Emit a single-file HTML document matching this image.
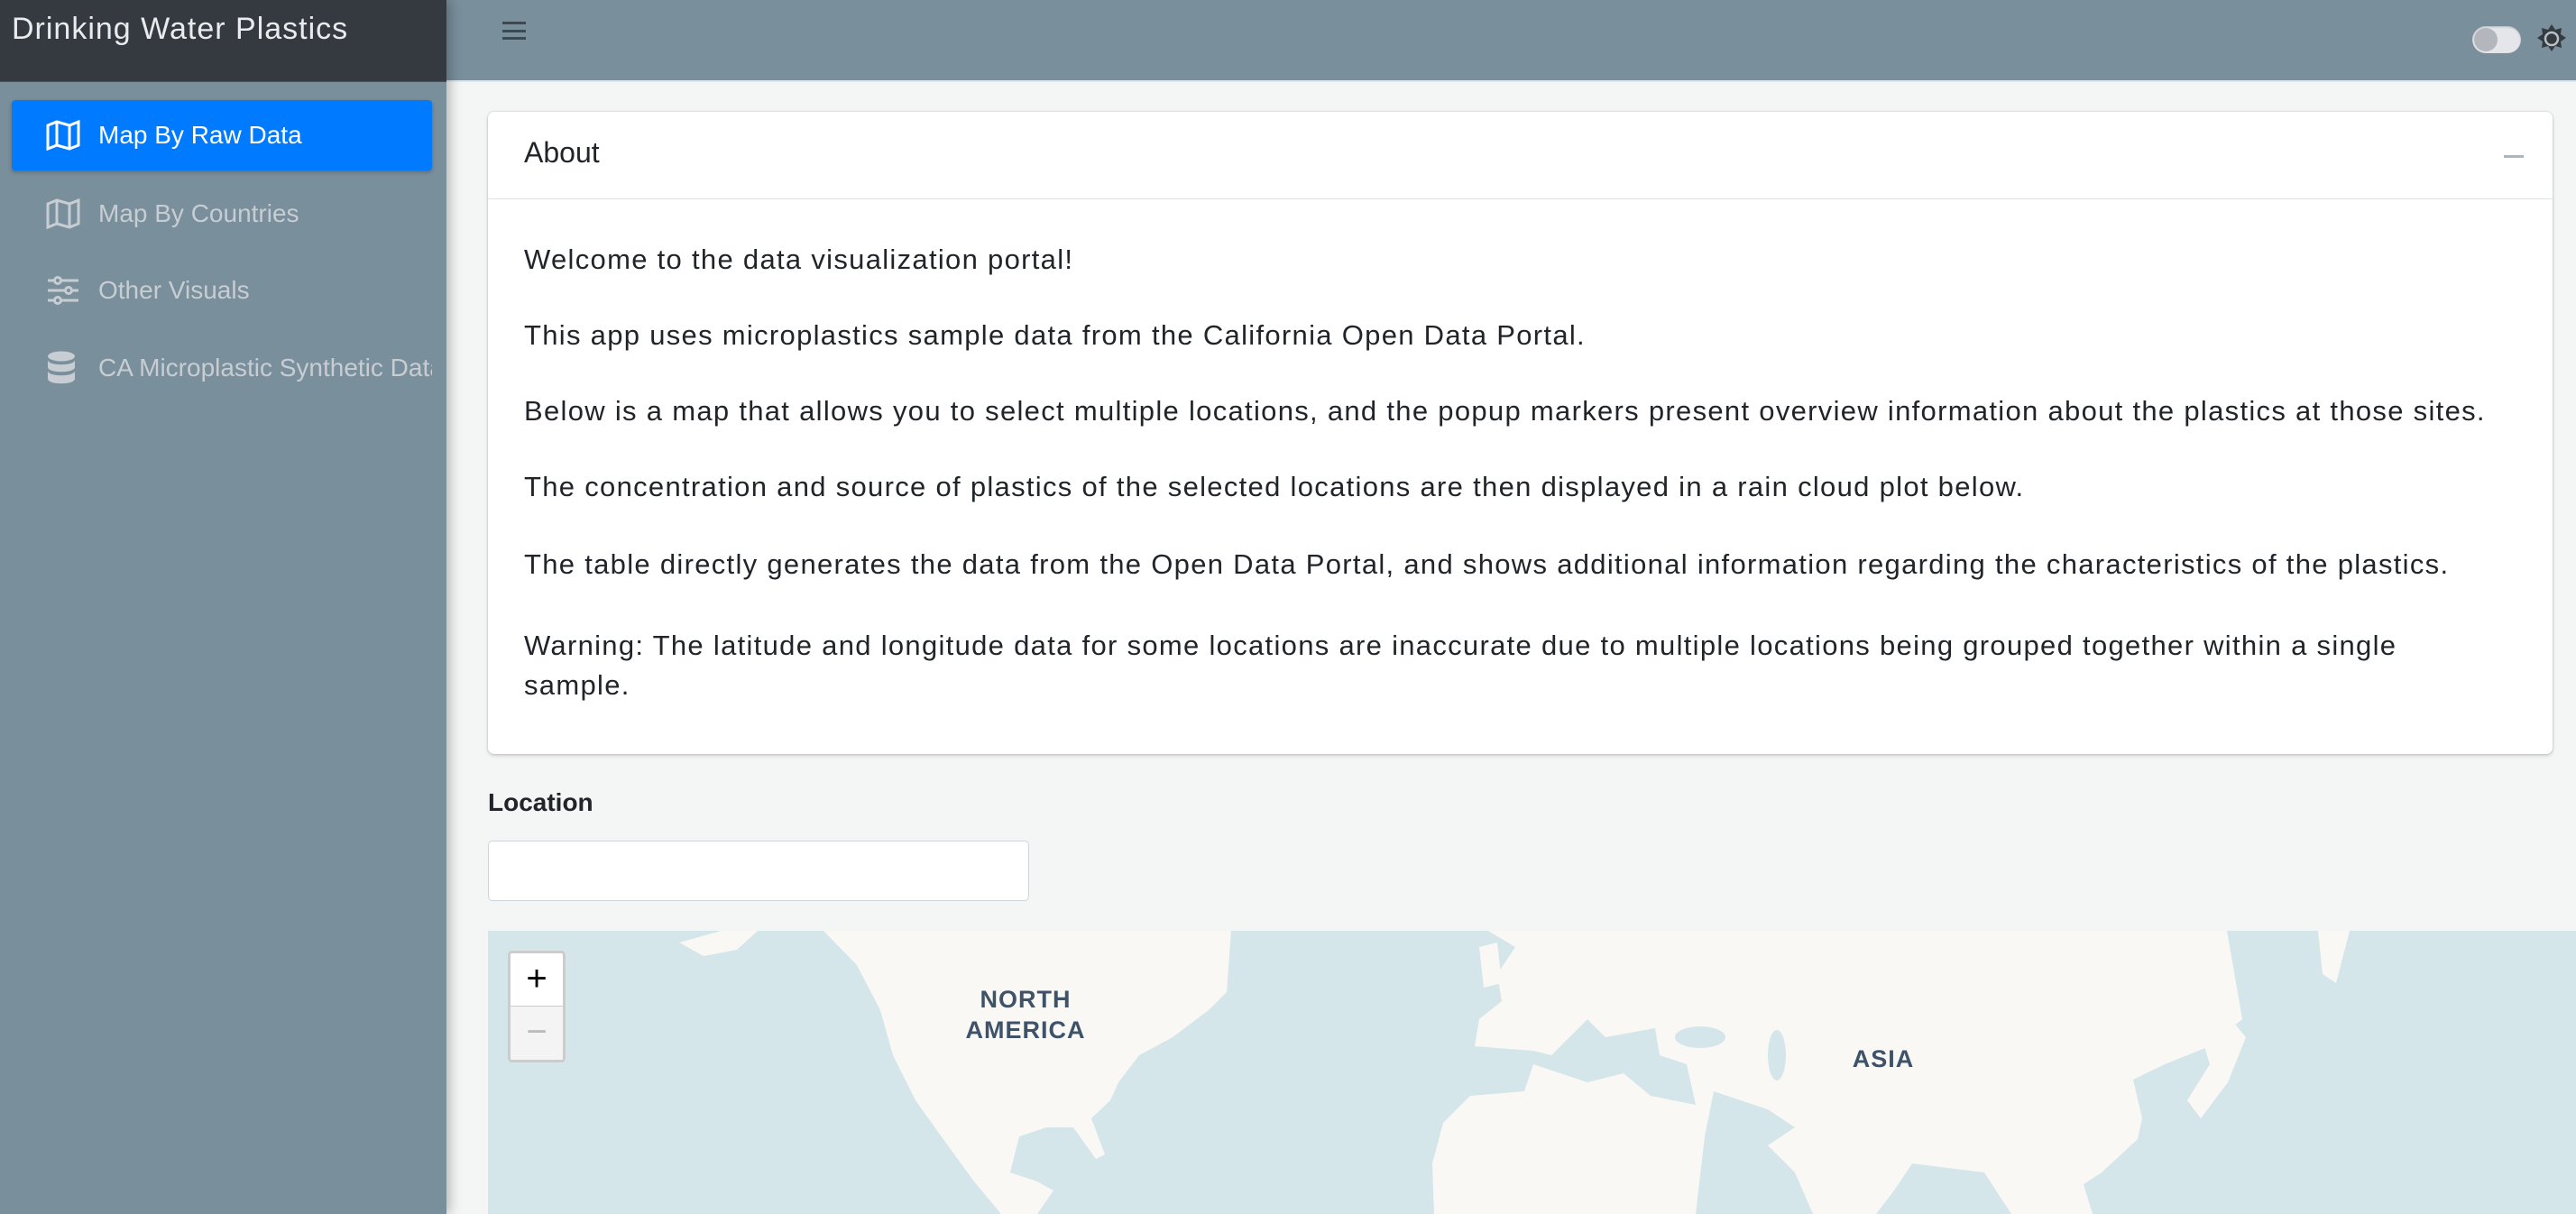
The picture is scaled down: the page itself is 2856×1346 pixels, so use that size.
<!DOCTYPE html>
<html><head><meta charset="utf-8"><style>
*{box-sizing:border-box;margin:0;padding:0}
body{width:2856px;height:1346px;overflow:hidden;background:#f4f6f6;font-family:"Liberation Sans",sans-serif;position:relative}
.sb{position:absolute;left:0;top:0;width:495px;height:1346px;background:#798f9b;box-shadow:4px 0 12px rgba(0,0,0,.25);z-index:2}
.brand{height:91px;background:#343a40;color:#e9ecef;font-size:34px;letter-spacing:1px;padding:13px 0 0 13px;border-bottom:1px solid #4b545c}
.nav{position:absolute;left:13px;width:466px;height:78px;border-radius:4px;color:#c8cdd3;font-size:28px;display:flex;align-items:center;overflow:hidden}
.nav svg{position:absolute;left:38px}
.nav span{position:absolute;left:96px;white-space:nowrap}
.nav.act{background:#007bff;color:#fff;box-shadow:0 2px 4px rgba(0,0,0,.25)}
.top{position:absolute;left:495px;top:0;right:0;height:91px;background:#798f9c;border-bottom:2px solid #e2e6ea}
.card{position:absolute;left:541px;top:124px;width:2289px;height:712px;background:#fff;border-radius:7px;box-shadow:0 0 2px rgba(0,0,0,.2),0 2px 4px rgba(0,0,0,.15)}
.ch{height:97px;border-bottom:1px solid #dfe2e5;font-size:32px;color:#212529;padding:27px 0 0 40px}
.cb{padding:0 40px;font-size:31px;letter-spacing:1.3px;color:#212529;line-height:44px}
.cb p{position:absolute;left:40px;width:2210px}
</style></head><body>
<div class="sb">
<div class="brand">Drinking Water Plastics</div>
<div class="nav act" style="top:111px"><svg width="38" height="34" viewBox="0 0 38 34" fill="none" stroke="#fff" stroke-width="3"><path d="M2 6 L12 2 L26 6 L36 2 V28 L26 32 L12 28 L2 32 Z M12 2 V28 M26 6 V32"/></svg><span>Map By Raw Data</span></div>
<div class="nav" style="top:198px"><svg width="38" height="34" viewBox="0 0 38 34" fill="none" stroke="#c8cdd3" stroke-width="3"><path d="M2 6 L12 2 L26 6 L36 2 V28 L26 32 L12 28 L2 32 Z M12 2 V28 M26 6 V32"/></svg><span>Map By Countries</span></div>
<div class="nav" style="top:283px"><svg width="38" height="34" viewBox="0 0 38 34" fill="none" stroke="#c8cdd3" stroke-width="3"><path d="M2 6H36M2 17H36M2 28H36"/><circle cx="13" cy="6" r="3.5" fill="#798f9b"/><circle cx="25" cy="17" r="3.5" fill="#798f9b"/><circle cx="13" cy="28" r="3.5" fill="#798f9b"/></svg><span>Other Visuals</span></div>
<div class="nav" style="top:369px"><svg width="34" height="38" viewBox="0 0 34 38" fill="#c8cdd3"><ellipse cx="17" cy="6" rx="15" ry="5.5"/><path d="M2 10c0 7 30 7 30 0v8c0 7-30 7-30 0z M2 22c0 7 30 7 30 0v9c0 7-30 7-30 0z"/></svg><span>CA Microplastic Synthetic Data</span></div>
</div>
<div class="top">
<div style="position:absolute;left:62px;top:24px;width:26px;height:20px;border-top:3px solid #3d4852;border-bottom:3px solid #3d4852"><div style="margin-top:6px;border-top:3px solid #3d4852"></div></div>
<div style="position:absolute;left:2246px;top:29px;width:54px;height:30px;border-radius:15px;background:#e4e6e9;box-shadow:inset 0 1px 2px rgba(0,0,0,.2)"><div style="position:absolute;left:2px;top:2px;width:26px;height:26px;border-radius:50%;background:#b3b7bd"></div></div>
<svg style="position:absolute;left:2317px;top:26px" width="34" height="34" viewBox="0 0 34 34"><path d="M17 1l4 6 7-2-1 7 6 4-6 4 1 7-7-2-4 6-4-6-7 2 1-7-6-4 6-4-1-7 7 2z" fill="#343a40"/><circle cx="17" cy="17" r="7" fill="none" stroke="#b8c1c8" stroke-width="2.5"/></svg>
</div>
<div class="card">
<div class="ch">About<div style="position:absolute;right:32px;top:48px;width:22px;height:3px;background:#adb5bd"></div></div>
<div class="cb">
<p style="top:142px">Welcome to the data visualization portal!</p>
<p style="top:226px">This app uses microplastics sample data from the California Open Data Portal.</p>
<p style="top:310px">Below is a map that allows you to select multiple locations, and the popup markers present overview information about the plastics at those sites.</p>
<p style="top:394px">The concentration and source of plastics of the selected locations are then displayed in a rain cloud plot below.</p>
<p style="top:480px">The table directly generates the data from the Open Data Portal, and shows additional information regarding the characteristics of the plastics.</p>
<p style="top:570px">Warning: The latitude and longitude data for some locations are inaccurate due to multiple locations being grouped together within a single<br>sample.</p>
</div></div>
<div style="position:absolute;left:541px;top:874px;font-size:28px;font-weight:bold;color:#212529">Location</div>
<div style="position:absolute;left:541px;top:932px;width:600px;height:67px;background:#fff;border:1px solid #ced4da;border-radius:5px"></div>
<svg style="position:absolute;left:541px;top:1032px" width="2315" height="314" viewBox="541 1032 2315 314">
<rect x="541" y="1032" width="2315" height="314" fill="#d4e6ea"/>
<g fill="#faf8f5">
<path d="M913 1032 L1365 1032 L1360 1100 L1340 1120 L1300 1150 L1263 1170 L1240 1200 L1231 1220 L1210 1240 L1225 1280 L1215 1285 L1190 1250 L1160 1250 L1130 1260 L1120 1300 L1150 1310 L1168 1320 L1150 1346 L1110 1346 L1080 1310 L1040 1255 L1015 1220 L990 1170 L976 1120 L950 1070 Z"/>
<path d="M753 1045 L800 1032 L840 1032 L817 1053 L780 1060 Z"/>
<path d="M1650 1032 L2469 1032 L2486 1130 L2450 1160 L2400 1180 L2365 1197 L2375 1240 L2370 1263 L2330 1300 L2310 1313 L2320 1346 L2230 1346 L2200 1300 L2120 1290 L2100 1320 L2080 1346 L2010 1346 L1990 1300 L1960 1270 L1990 1250 L1960 1230 L1900 1210 L1890 1260 L1880 1346 L1590 1346 L1588 1290 L1600 1245 L1630 1215 L1690 1210 L1700 1180 L1760 1200 L1800 1190 L1830 1215 L1880 1225 L1870 1180 L1840 1170 L1835 1140 L1780 1150 L1760 1130 L1720 1170 L1700 1165 L1635 1160 L1640 1130 L1665 1110 L1660 1080 L1680 1050 Z"/>
<path d="M2435 1130 L2465 1120 L2490 1150 L2470 1200 L2440 1240 L2425 1220 L2450 1180 Z"/>
<path d="M2570 1032 L2605 1032 L2590 1090 L2575 1080 Z"/>
<path d="M1640 1050 L1660 1045 L1665 1090 L1645 1095 Z"/>
</g>
<g fill="#d4e6ea"><ellipse cx="1885" cy="1150" rx="28" ry="12"/><ellipse cx="1970" cy="1170" rx="10" ry="28"/></g>
<g font-family="Liberation Sans,sans-serif" font-size="27" font-weight="bold" fill="#3e5269" text-anchor="middle" letter-spacing="1">
<text x="1137" y="1117">NORTH</text><text x="1137" y="1151">AMERICA</text><text x="2088" y="1183">ASIA</text></g>
</svg>
<div style="position:absolute;left:563px;top:1054px;width:64px;height:124px;border:3px solid rgba(0,0,0,.2);border-radius:5px;background:#fff;overflow:hidden">
<div style="height:59px;border-bottom:1px solid #ccc;text-align:center;font-size:40px;line-height:56px;color:#000">+</div>
<div style="height:60px;background:#f4f4f4;text-align:center;font-size:40px;line-height:56px;color:#bbb">−</div></div>
</body></html>
